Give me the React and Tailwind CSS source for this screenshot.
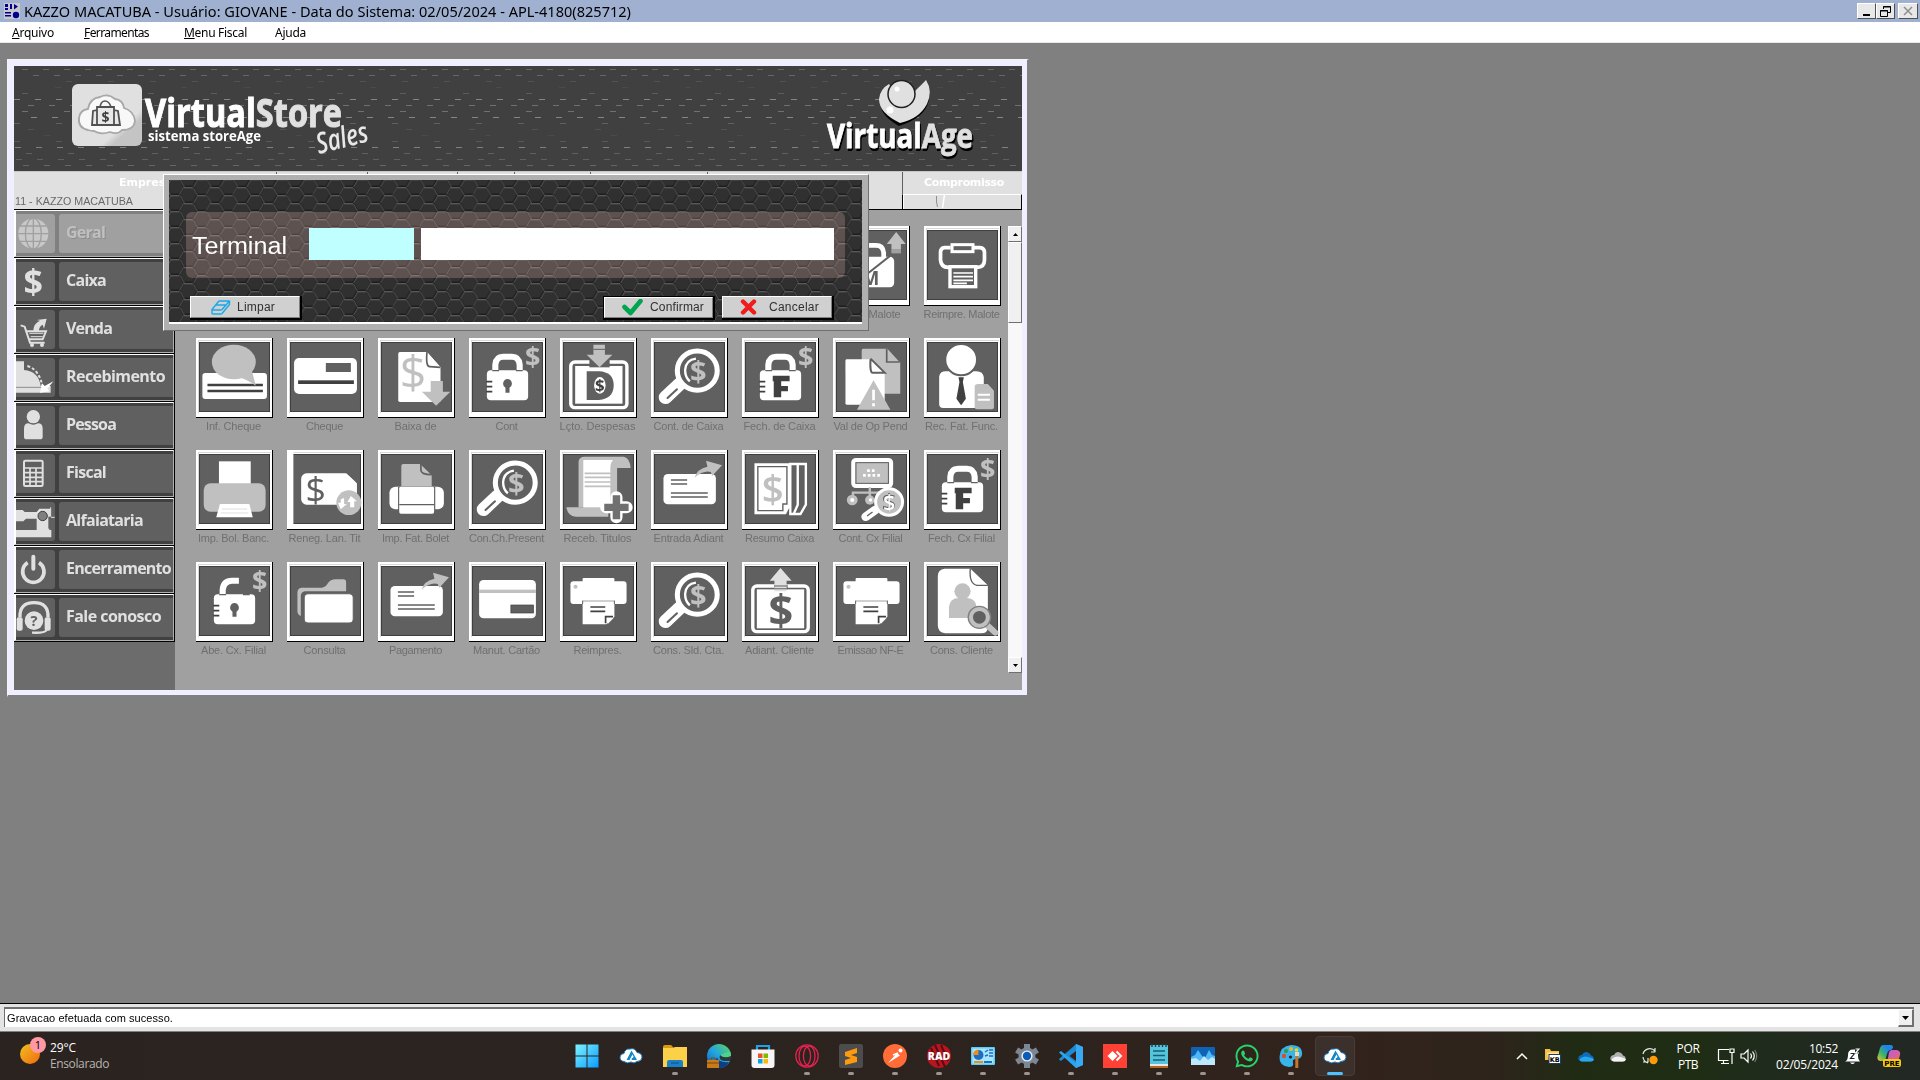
import React, { useLayoutEffect, useRef } from "react";
import { FaWhatsapp } from "react-icons/fa";

/* Text run set to a given width, by letter spacing or by horizontal scale */
function Fit({ w, scale, className = "", children }) {
  const ref = useRef(null);
  useLayoutEffect(() => {
    const el = ref.current;
    el.style.letterSpacing = "0px";
    el.style.transform = "none";
    const nat = el.getBoundingClientRect().width;
    if (scale) el.style.transform = `scaleX(${w / nat})`;
    else el.style.letterSpacing = `${(w - nat) / el.textContent.length}px`;
  }, [w, scale]);
  return (
    <span ref={ref} className={"inline-block origin-left whitespace-pre " + className}>
      {children}
    </span>
  );
}

const W = "#ffffff";
const G = "#c0c0c0";
const D = "#606060";
const K = "#404040";

const Dollar = ({ x, y, s = 60, fill = G, weight = 700 }) => (
  <text x={x} y={y + s * 0.36} fontSize={s} fill={fill} fontWeight={weight} textAnchor="middle" fontFamily="Open Sans, sans-serif">$</text>
);

const Lock = ({ mark, open }) => (
  <>
    {open ? (
      <path d="M70 88V72Q72 44 98 44h20" fill="none" stroke={W} strokeWidth="18" />
    ) : (
      <path d="M69 86V68Q71 44 92 44h26Q139 44 141 68V86" fill="none" stroke={W} strokeWidth="18" />
    )}
    <rect x="44" y="85" width="122" height="90" rx="12" fill={W} />
    <path d="M60 86h20M130 86h20" stroke={D} strokeWidth="4" />
    <path d="M42 119h18M42 134h18M42 149h18" stroke={K} strokeWidth="5" />
    {mark ? (
      <path d="M82 101h50v17h-25v14h20v16h-20v18H85V118h-3z" fill={K} />
    ) : (
      <path d="M105 111a14 14 0 0 1 6 26v15h-12v-15a14 14 0 0 1 6-26z" fill={D} />
    )}
    <Dollar x={180} y={43} s={80} />
  </>
);

const Magnifier = () => (
  <>
    <path d="M34 166L76 126" stroke={W} strokeWidth="40" strokeLinecap="round" />
    <path d="M40 168L68 142" stroke={D} strokeWidth="6" strokeLinecap="round" />
    <circle cx="128" cy="86" r="59" fill={D} stroke={W} strokeWidth="15" />
    <path d="M124 50Q94 54 92 84Q92 106 106 118" fill="none" stroke={W} strokeWidth="7" />
    <Dollar x={131} y={90} s={86} />
  </>
);

const SendCard = () => (
  <>
    <rect x="28" y="60" width="155" height="91" rx="13" fill={W} />
    <path d="M50 78h48M50 90h48M50 117h109M50 129h109" stroke={D} strokeWidth="4.5" />
    <path d="M120 71Q128 44 158 38L154 20L201 34L172 66L168 54Q146 48 120 71z" fill={G} />
  </>
);

const Printer = () => (
  <>
    <rect x="58" y="36" width="94" height="14" rx="3" fill={W} />
    <rect x="22" y="46" width="166" height="68" rx="9" fill={W} />
    <circle cx="37" cy="62" r="6" fill={G} />
    <path d="M58 106h94v46l-24 23h-70z" fill={W} />
    <path d="M57 105h96" stroke={G} strokeWidth="4" />
    <path d="M58 114v-10M152 114v-10" stroke={D} strokeWidth="3" />
    <path d="M81 123h44M81 136h44" stroke={K} strokeWidth="5" />
    <path d="M126 172v-20h22" fill="none" stroke={K} strokeWidth="5" />
    <path d="M132 172l16-16z" stroke={W} strokeWidth="3" />
  </>
);

const TILE_ART = {
  maloteUp: (
    <>
      <path d="M69 85V68Q71 46 92 46h26Q139 46 141 68V86" fill="none" stroke={W} strokeWidth="14" />
      <rect x="30" y="80" width="142" height="92" rx="13" fill={W} />
      <path d="M92 132L172 68" stroke={D} strokeWidth="6" />
      <text x="102" y="165" fontSize="56" fontWeight="700" fill={D} textAnchor="middle" fontFamily="Open Sans, sans-serif">M</text>
      <path d="M178 6l28 36h-14v28h-28V42h-14z" fill={G} />
      <path d="M164 60h28M164 66h28" stroke={D} strokeWidth="2" />
    </>
  ),
  reprint: (
    <>
      <path d="M70 53H52Q40 54 40 68V90Q42 112 62 112H148Q170 112 170 90V68Q170 54 156 53H138" fill="none" stroke={W} strokeWidth="11" />
      <rect x="74" y="44" width="62" height="21" fill={D} stroke={W} strokeWidth="9" />
      <rect x="68" y="110" width="76" height="60" fill={D} stroke={W} strokeWidth="10" />
      <path d="M78 129h58M78 140h58M78 151h58M78 160h40" stroke={W} strokeWidth="5" />
    </>
  ),
  infCheque: (
    <>
      <rect x="10" y="93" width="191" height="78" rx="9" fill={W} />
      <path d="M25 129h164M25 147h164" stroke={K} strokeWidth="8" />
      <ellipse cx="103" cy="60" rx="65" ry="52" fill={G} />
      <path d="M118 106Q140 112 168 131L156 84z" fill={G} />
    </>
  ),
  cheque: (
    <>
      <rect x="12" y="48" width="186" height="108" rx="15" fill={W} />
      <rect x="106" y="63" width="74" height="27" fill={D} />
      <rect x="24" y="115" width="165" height="11" fill={K} />
    </>
  ),
  baixa: (
    <>
      <path d="M56 30h80l40 46v100q0 4-4 4H56q-5 0-5-5V36q0-6 5-6z" fill={W} />
      <path d="M136 30q-4 44 8 44l32 2" fill={W} stroke={D} strokeWidth="5" />
      <Dollar x={95} y={90} s={138} weight={400} />
      <path d="M147 117h36v32h22l-42 42-42-42h26z" fill={G} />
    </>
  ),
  lock: <Lock />,
  lockF: <Lock mark />,
  lockOpen: <Lock open />,
  despesas: (
    <>
      <rect x="23" y="60" width="166" height="137" rx="12" fill={D} stroke={W} strokeWidth="10" />
      <rect x="36" y="72" width="140" height="113" fill={W} />
      <path d="M70 88h36q44 2 44 42t-44 44H70z" fill={D} />
      <ellipse cx="109" cy="130" rx="17" ry="25" fill={W} />
      <Dollar x={109} y={130} s={50} fill={K} />
      <path d="M78 44h60v32H78z" fill={D} />
      <path d="M90 8h34v30h22l-38 38-38-38h20z" fill={G} />
      <path d="M90 22h34" stroke={D} strokeWidth="3" />
    </>
  ),
  magnifier: <Magnifier />,
  pending: (
    <>
      <path d="M80 20h72l38 42v93H80q-4 0-4-4V26q0-6 4-6z" fill={G} />
      <path d="M150 20v40h38" fill="none" stroke={D} strokeWidth="5" />
      <path d="M32 52h70l42 42v90q0 4-4 4H32q-4 0-4-4V56q0-4 4-4z" fill={W} />
      <path d="M102 52v0l42 42v-42z" fill={G} />
      <path d="M102 52q-2 40 6 40h36l-42-42" fill={W} stroke={D} strokeWidth="6" />
      <path d="M111 115l50 88H62z" fill={G} />
      <path d="M111 143v32M111 184v9" stroke={W} strokeWidth="8" />
    </>
  ),
  funcionario: (
    <>
      <path d="M36 104q2-16 20-16h90q20 0 22 18v80q0 12-12 12H48q-12 0-12-12z" fill={W} />
      <circle cx="101" cy="53" r="47" fill={W} stroke={D} strokeWidth="6" />
      <path d="M93 106h16l-3 14 9 50-14 20-14-20 9-50z" fill={K} />
      <path d="M152 126h28l18 20v50q0 6-6 6h-44q-7 0-7-6v-62q0-8 11-8z" fill={G} />
      <path d="M150 158h36M150 173h36" stroke={W} strokeWidth="6" />
    </>
  ),
  boleto: (
    <>
      <rect x="59" y="22" width="94" height="70" fill={W} />
      <rect x="14" y="88" width="183" height="85" rx="20" fill={G} />
      <path d="M62 150h87l10 40H51z" fill={W} />
      <path d="M68 165h74M64 177h82" stroke="#e0e0e0" strokeWidth="3" />
    </>
  ),
  reneg: (
    <>
      <path d="M-4 -6h14v222h-14z" fill={W} />
      <rect x="33" y="58" width="165" height="94" rx="16" fill={W} />
      <path d="M164 56h40v38z" fill={D} />
      <path d="M166 58v28h30z" fill={W} />
      <Dollar x={76} y={106} s={106} fill={D} weight={400} />
      <circle cx="174" cy="146" r="37" fill={G} />
      <path d="M160 132v18h8l-18 16-8-20h8v-10zM190 160v-18h8l-18-16-10 18h8v16z" fill={W} />
    </>
  ),
  fatura: (
    <>
      <path d="M66 30h50l34 34v32H60V36q0-6 6-6z" fill={G} />
      <path d="M118 30v18q0 14 32 14" fill="none" stroke={D} strokeWidth="5" />
      <rect x="25" y="98" width="161" height="68" rx="18" fill={W} />
      <path d="M53 98v80M158 98v80" stroke={D} strokeWidth="5" />
      <rect x="54" y="98" width="103" height="81" rx="5" fill={W} />
      <path d="M54 152h103" stroke={D} strokeWidth="4" />
    </>
  ),
  titulos: (
    <>
      <path d="M46 24Q46 10 62 8h118q18 4 20 34h-40v118H46z" fill={G} />
      <path d="M60 18h88q-8 8-8 24v122H60z" fill={W} />
      <path d="M10 160h124v28H38Q14 186 10 160z" fill={G} />
      <path d="M64 58h78M64 70h78M64 84h78M64 97h78" stroke={G} strokeWidth="5" />
      <path d="M158 130v60M128 160h60" stroke={W} strokeWidth="36" strokeLinecap="round" />
      <path d="M158 124v72M122 160h72" stroke="#707070" strokeWidth="22" />
    </>
  ),
  sendCard: <SendCard />,
  resumo: (
    <>
      <path d="M134 30h46v122l-16 28h-30z" fill="none" stroke={W} strokeWidth="7" />
      <path d="M156 30v122l-12 28" fill="none" stroke={W} strokeWidth="7" />
      <path d="M28 28h107v125l-14 28H28z" fill={W} />
      <path d="M38 38h86v112h-12v20H38z" fill="none" stroke={D} strokeWidth="4" />
      <Dollar x={82} y={105} s={114} weight={600} />
    </>
  ),
  filial: (
    <>
      <rect x="51" y="18" width="112" height="78" rx="8" fill={G} stroke={W} strokeWidth="12" />
      <rect x="59" y="26" width="96" height="62" fill={G} stroke={D} strokeWidth="3" />
      <path d="M92 50h26M80 64h52" stroke={W} strokeWidth="8" strokeDasharray="8 6" />
      <path d="M100 100v30M50 130v-14h106v14" fill="none" stroke={G} strokeWidth="7" />
      <circle cx="48" cy="138" r="16" fill={G} />
      <circle cx="100" cy="138" r="14" fill={G} />
      <circle cx="48" cy="138" r="6" fill={W} />
      <circle cx="102" cy="138" r="5" fill={W} />
      <path d="M88 188L116 168" stroke={W} strokeWidth="26" strokeLinecap="round" />
      <path d="M92 186L108 174" stroke={D} strokeWidth="4" />
      <circle cx="157" cy="144" r="40" fill={G} stroke={W} strokeWidth="9" />
      <Dollar x={157} y={144} s={72} fill={D} weight={700} />
      <Dollar x={157} y={144} s={64} fill={W} weight={600} />
    </>
  ),
  folder: (
    <>
      <path d="M32 150q-10-4-10-14V80q0-14 12-15h60q10 0 18-13t26-12h20q8 0 8 10v26H44q-10 2-12 12z" fill={G} />
      <rect x="42" y="83" width="145" height="88" rx="12" fill={W} stroke={D} strokeWidth="3" />
    </>
  ),
  card: (
    <>
      <rect x="21" y="42" width="168" height="115" rx="13" fill={W} />
      <rect x="21" y="71" width="168" height="10" fill={G} />
      <rect x="115" y="117" width="67" height="24" fill={D} stroke={K} strokeWidth="2" />
    </>
  ),
  printer: <Printer />,
  adiant: (
    <>
      <rect x="23" y="60" width="164" height="137" rx="12" fill={D} stroke={W} strokeWidth="10" />
      <rect x="35" y="70" width="140" height="117" fill={W} />
      <Dollar x={106} y={134} s={128} fill={D} />
      <path d="M86 56h40v14H86z" fill={D} />
      <path d="M105 6l33 38h-15v32H87V44H73z" fill="#e0e0e0" />
      <path d="M87 60h36M87 68h36" stroke={D} strokeWidth="3" />
    </>
  ),
  cliente: (
    <>
      <path d="M52 8h76l52 52v122q0 20-20 20H54q-22-2-22-24V30Q32 10 52 8z" fill={W} />
      <path d="M128 8q-4 46 20 50h32" fill={W} stroke={D} strokeWidth="4" />
      <circle cx="105" cy="76" r="24" fill={G} />
      <path d="M65 156V124q2-28 30-28h24q26 2 28 28v32z" fill={G} />
      <path d="M174 174l28 26" stroke={G} strokeWidth="18" strokeLinecap="round" />
      <circle cx="155" cy="154" r="25" fill={D} stroke="#808080" strokeWidth="20" />
      <circle cx="155" cy="154" r="25" fill={D} stroke={G} strokeWidth="12" />
    </>
  ),
};

const ROWS = [
  [
    ["maloteUp", "Malote", 32],
    ["reprint", "Reimpre. Malote", 76],
  ],
  [
    ["infCheque", "Inf. Cheque", 55],
    ["cheque", "Cheque", 37],
    ["baixa", "Baixa de", 42],
    ["lock", "Cont", 22],
    ["despesas", "Lçto. Despesas", 76],
    ["magnifier", "Cont. de Caixa", 70],
    ["lockF", "Fech. de Caixa", 72],
    ["pending", "Val de Op Pend", 74],
    ["funcionario", "Rec. Fat. Func.", 73],
  ],
  [
    ["boleto", "Imp. Bol. Banc.", 71],
    ["reneg", "Reneg. Lan. Tit", 72],
    ["fatura", "Imp. Fat. Bolet", 67],
    ["magnifier", "Con.Ch.Present", 75],
    ["titulos", "Receb. Titulos", 68],
    ["sendCard", "Entrada Adiant", 70],
    ["resumo", "Resumo Caixa", 69],
    ["filial", "Cont. Cx Filial", 64],
    ["lockF", "Fech. Cx Filial", 67],
  ],
  [
    ["lockOpen", "Abe. Cx. Filial", 65],
    ["folder", "Consulta", 42],
    ["sendCard", "Pagamento", 53],
    ["card", "Manut. Cartão", 67],
    ["printer", "Reimpres.", 48],
    ["magnifier", "Cons. Sld. Cta.", 71],
    ["adiant", "Adiant. Cliente", 69],
    ["printer", "Emissao NF-E", 66],
    ["cliente", "Cons. Cliente", 63],
  ],
];

function Tile({ art, label, w, align = "pr-[2px]" }) {
  return (
    <div className="flex h-28 w-[91px] shrink-0 flex-col">
      <div className="flex h-20 w-[77px] border-b border-r border-black bg-white pl-[2px] pt-[2px]">
        <div className="h-[73px] w-[73px] border-l border-t border-[#d8d8d8] pt-px">
          <svg viewBox="0 0 210 210" className="h-[70px] w-[71px] overflow-visible" preserveAspectRatio="none">
            <rect width="210" height="210" fill={K} />
            <rect x="3" y="3" width="204" height="204" fill={D} />
            {TILE_ART[art]}
          </svg>
        </div>
      </div>
      <div className={"-mt-px flex h-[18px] w-[77px] items-center justify-center " + align}>
        <Fit w={w} className="text-[11px] leading-[18px] text-[#707070]">{label}</Fit>
      </div>
    </div>
  );
}

const L = "#e0e0e0";
const SIDE_ART = {
  globe: (
    <>
      <circle cx="52" cy="59" r="45" fill="#c8c8c8" />
      <g fill="none" stroke="#a0a0a0" strokeWidth="4">
        <path d="M52 12v94M4 59h96M12 36h80M12 82h80" />
        <ellipse cx="52" cy="59" rx="24" ry="46" />
      </g>
    </>
  ),
  dollar: <Dollar x={52} y={60} s={102} fill={L} />,
  cart: (
    <>
      <path d="M14 46l12 4 16 48h44M30 64h60L80 88H40" fill="none" stroke={L} strokeWidth="6" />
      <path d="M40 70h42M44 80h36" stroke={L} strokeWidth="3" />
      <circle cx="48" cy="105" r="6" fill={L} />
      <circle cx="78" cy="105" r="6" fill={L} />
      <path d="M52 64q0-24 20-32l-10-2 30-4-8 30-4-12q-10 4-12 20z" fill={L} />
    </>
  ),
  receb: (
    <>
      <path d="M0 10h24v26q44 4 50 48h30v20H0z" fill={L} />
      <path d="M34 24q36 10 46 64" fill="none" stroke={L} strokeWidth="6" strokeDasharray="9 6" />
      <path d="M0 88h86" stroke={D} strokeWidth="2" />
      <path d="M72 104l6-28 8 8 26-14-18 22 6 8z" fill={W} />
    </>
  ),
  person: (
    <>
      <circle cx="52" cy="32" r="20" fill={L} />
      <path d="M38 52q14 8 28 0 14 0 14 16v24q0 8-8 8H32q-8 0-8-8V68q0-16 14-16z" fill={L} />
    </>
  ),
  calc: (
    <>
      <rect x="24" y="20" width="56" height="76" rx="4" fill={D} stroke={L} strokeWidth="6" />
      <path d="M26 42h52M26 56h52M26 70h52M26 83h52M42 42v52M60 42v52" stroke={L} strokeWidth="5" />
    </>
  ),
  sewing: (
    <>
      <path d="M0 24h20l6 6h36l8-10h34v52h-4v16H62V50H30l-8 8H0z" fill={L} />
      <path d="M0 84h106v22H0z" fill={L} />
      <circle cx="80" cy="42" r="14" fill="#808080" stroke={K} strokeWidth="3" />
      <path d="M104 16v30h12" stroke={L} strokeWidth="3" fill="none" />
      <path d="M97 44h8v36h-8z" fill={D} />
    </>
  ),
  power: (
    <>
      <path d="M35 38a32 32 0 1 0 34 0" fill="none" stroke={L} strokeWidth="11" />
      <path d="M52 20v36" stroke={L} strokeWidth="12" strokeLinecap="round" />
    </>
  ),
  headset: (
    <>
      <path d="M12 58Q10 14 54 14T96 58" fill="none" stroke={L} strokeWidth="10" />
      <rect x="2" y="58" width="18" height="40" rx="6" fill={L} />
      <rect x="86" y="58" width="18" height="40" rx="6" fill={L} />
      <circle cx="54" cy="68" r="28" fill={L} />
      <text x="54" y="84" fontSize="44" fontWeight="700" fill={D} textAnchor="middle" fontFamily="Open Sans, sans-serif">?</text>
      <path d="M92 96q-6 10-44 8" fill="none" stroke={L} strokeWidth="7" />
    </>
  ),
};

const SIDE = [
  ["globe", "Geral", 39],
  ["dollar", "Caixa", 40],
  ["cart", "Venda", 46],
  ["receb", "Recebimento", 99],
  ["person", "Pessoa", 50],
  ["calc", "Fiscal", 40],
  ["sewing", "Alfaiataria", 77],
  ["power", "Encerramento", 105],
  ["headset", "Fale conosco", 95],
];

function SideItem({ art, label, w, off }) {
  return (
    <div className="h-12 border-b border-r border-black">
      <div className="h-[47px] border-b border-l-2 border-r border-t border-white border-b-[#b0b0b0] border-r-[#b0b0b0]">
        <div className={"flex h-[45px] items-center gap-1 pb-px " + (off ? "bg-[#808080]" : "bg-[#404040]")}>
          <div className={"h-[39px] w-[39px] rounded-r-[3px] " + (off ? "bg-[#a0a0a0]" : "bg-[#606060]")}>
            <svg viewBox="0 0 117 117" className="h-[39px] w-[39px] overflow-visible">{SIDE_ART[art]}</svg>
          </div>
          <div className={"flex h-[39px] min-w-0 flex-1 items-center rounded-l-[3px] pb-[3px] pl-[7px] " + (off ? "bg-[#a0a0a0]" : "bg-[#606060]")}>
            <Fit w={w} className={"font-['Open_Sans',sans-serif] text-[16px] font-bold leading-5 " + (off ? "text-[#c0c0c0] [text-shadow:1px_1px_0_#8c8c8c]" : "text-[#e0e0e0]")}>{label}</Fit>
          </div>
        </div>
      </div>
    </div>
  );
}

/* [y, x offset, colour, pitch] of every row of dashes in the banner */
const DASHES = [
  [3, 8, "#666666", 21], [9, 19, "#666666", 21], [15, 52, "#525252", 42], [21, 41, "#4a4a4a", 63],
  [27, 8, "#5c5c5c", 63], [33, 0, "#858585", 21], [39, 14, "#707070", 21], [45, 8, "#707070", 42],
  [51, 17, "#858585", 21], [57, 0, "#606060", 42], [63, 14, "#525252", 63], [69, 30, "#4a4a4a", 63],
  [75, 0, "#585858", 42], [81, 1, "#808080", 21], [87, 12, "#606060", 42], [93, 2, "#606060", 21], [99, 9, "#666666", 21],
];

function DashTexture() {
  return (
    <svg className="absolute inset-0 h-[105px] w-[1008px]">
      {DASHES.map(([y, x, c, p]) => (
        <path key={y} d={`M${x} ${y + 0.5}H1008`} stroke={c} strokeWidth="1" strokeDasharray={`6 ${p - 6}`} />
      ))}
    </svg>
  );
}

function Banner() {
  return (
    <div className="relative flex h-[105px] justify-between bg-[#404040]">
      <DashTexture />
      <div className="relative flex pl-[58px] pt-[18px]">
        <svg className="h-[62px] w-[70px]" viewBox="0 0 70 62">
          <defs>
            <linearGradient id="badge" x1="0" y1="0" x2="1" y2="1">
              <stop offset="0.7" stopColor="#e0e0e0" />
              <stop offset="0.78" stopColor="#c4c4c4" />
            </linearGradient>
          </defs>
          <rect width="70" height="62" rx="6" fill="url(#badge)" />
          <path d="M16 46Q6 44 7 34Q8 26 16 25Q18 14 28 13Q36 9 43 15Q51 16 52 24Q62 27 63 37Q62 46 50 46Q46 51 38 48Q28 51 22 47Q19 47 16 46z" fill="#f8f8f8" stroke="#a8a8a8" strokeWidth="1.8" />
          <path d="M28 23q1-6 5-6t6 6" fill="none" stroke="#555" strokeWidth="1.6" />
          <path d="M25 23h17v18H25zM25 26l-4 1-1 14h5M42 26l4 1 2 14h-6" fill="#e8e8e8" stroke="#505050" strokeWidth="1.8" />
          <text x="33.500" y="38" fontSize="14" fontWeight="700" fill="#404040" textAnchor="middle" fontFamily="Open Sans, sans-serif">$</text>
        </svg>
        <div className="relative ml-[3px] w-[240px] font-['Open_Sans',sans-serif] font-bold">
          <div className="h-[42px] text-[40px] leading-[56px] text-white">
            <Fit w={197} scale className="[-webkit-text-stroke:1px]">Virtual<span className="text-[#e0e0e0]">Store</span></Fit>
          </div>
          <div className="pl-[3px] text-[14px] leading-[20px] text-white">
            <Fit w={113} scale>sistema storeAge</Fit>
          </div>
          <div className="absolute left-[170px] top-[33px] -rotate-[14deg] text-[29px] font-semibold italic leading-[36px] text-[#e8e8e8]">
            <Fit w={58} scale>Sales</Fit>
          </div>
        </div>
      </div>
      <div className="relative flex w-[195px] flex-col pt-[13px]">
        <svg className="ml-[50px] h-[48px] w-[56px]" viewBox="0 0 56 48">
          <path d="M22 47Q2 36 3 21Q3 11 11 6Q8 28 28 30Q40 30 42 8L48 2Q56 14 50 27Q44 40 22 47z" fill="#000" />
          <path d="M23 44Q2 34 2 20Q3 10 12 5L26 28Q38 26 38 12L49 1Q56 12 50 25Q42 40 23 44z" fill="#e0e0e0" />
          <circle cx="24.500" cy="15" r="13.500" fill="#e0e0e0" stroke="#202020" strokeWidth="1.5" />
          <circle cx="20" cy="10" r="2.500" fill="#fff" />
          <circle cx="13" cy="31" r="3.500" fill="#fff" />
        </svg>
        <div className="-mt-[16px] font-['Open_Sans',sans-serif] text-[34px] font-bold leading-[48px] text-white [text-shadow:1px_3px_0_#000,2px_2px_0_#000]">
          <Fit w={146} scale className="[-webkit-text-stroke:0.8px]">Virtual<span className="text-[#e0e0e0]">Age</span></Fit>
        </div>
      </div>
    </div>
  );
}

const HEADS = [263, 91, 90, 57, 76, 117, 195];

function HeaderBand() {
  return (
    <div className="flex h-[39px] flex-col border-b border-black bg-[#e0e0e0]">
      <div className="flex h-[23px] border-t border-[#c8c8c8]">
        {HEADS.map((w, i) => (
          <div key={i} className="h-full shrink-0 border-r border-[#606060]" style={{ width: w }}>
            {i === 0 && (
              <div className="pl-[105px] pt-[2px] font-['DejaVu_Sans',sans-serif] text-[11px] font-bold leading-[18px] text-white">Empresa</div>
            )}
          </div>
        ))}
        <div className="flex-1 pl-[21px] pt-[2px] font-['DejaVu_Sans',sans-serif] text-[11px] font-bold leading-[18px] text-white">
          <Fit w={80}>Compromisso</Fit>
        </div>
      </div>
      <div className="flex flex-1">
        <div className="w-[889px] border-r border-t border-r-black border-t-[#e0e0e0] pl-px leading-[10px]">
          <Fit w={118} scale className="text-[11px] leading-[10px] text-[#686868]">11 - KAZZO MACATUBA</Fit>
        </div>
        <div className="flex flex-1 border-l border-r border-t border-white border-r-black pl-[31px]">
          <svg viewBox="0 0 14 14" className="h-[14px] w-[14px]">
            <path d="M1.500 1v6l1 5" fill="none" stroke="#909090" />
            <path d="M9.500 0l-2 13" fill="none" stroke="#fff" strokeWidth="1.500" />
          </svg>
        </div>
      </div>
    </div>
  );
}

const RAISED = "border border-b-[#707070] border-l-white border-r-[#707070] border-t-white bg-[#f0f0f0]";

function Arrow({ up, big }) {
  return (
    <svg viewBox="0 0 7 4" className={big ? "h-1 w-[7px]" : "h-[3px] w-[5px]"} preserveAspectRatio="none">
      <path d={up ? "M3.500 0L7 4H0z" : "M0 0h7L3.500 4z"} fill="#000" />
    </svg>
  );
}

function Scrollbar() {
  return (
    <div className="mt-[16px] flex h-[447px] w-[14px] shrink-0 flex-col bg-[#f8f8f8]">
      <div className={"flex h-4 items-center justify-center " + RAISED}><Arrow up /></div>
      <div className={"h-[81px] " + RAISED} />
      <div className="flex-1" />
      <div className={"flex h-4 items-center justify-center " + RAISED}><Arrow /></div>
    </div>
  );
}

function HexTexture() {
  return (
    <svg className="absolute inset-0 h-full w-full">
      <defs>
        <pattern id="hex" width="26.7" height="16" patternUnits="userSpaceOnUse" x="6" y="7">
          <rect width="26.700" height="16" fill="#303030" />
          <g fill="none" stroke="#1e1e1e" strokeWidth="1.800">
            <path d="M0 7.500H4.450L8.900 -0.500H17.800L22.250 7.500H26.700M4.450 7.500L8.900 15.500H17.800L22.250 7.500" />
          </g>
          <path d="M0 8.700H4.450M8.900 0.700H17.800M22.250 8.700H26.700" fill="none" stroke="#686868" strokeWidth="1" />
          <path d="M5.200 8.800L9.400 16M4.450 7.500L8.900 -0.300M18.200 1L22.400 8.200M22.600 8.800L18.400 16" fill="none" stroke="#505050" strokeWidth="1" />
        </pattern>
      </defs>
      <rect width="100%" height="100%" fill="url(#hex)" />
    </svg>
  );
}

function DialogButton({ icon, label, w, iconClass, main }) {
  return (
    <div className={"flex h-6 w-[112px] items-center border-b-2 border-r-2 border-black " + (main ? "border-l border-t" : "")}>
      <div className="flex h-full w-full items-center border border-b-[#808080] border-r-[#808080] border-l-white border-t-white bg-[#d0d0d0]">
        <div className={iconClass}>{icon}</div>
        <Fit w={w} className="pb-px text-[12px] leading-[18px] text-[#303030]">{label}</Fit>
      </div>
    </div>
  );
}

function Dialog() {
  return (
    <div className="absolute left-[163px] top-[131px] h-[157px] w-[706px] border border-b-[#707070] border-l-white border-r-[#707070] border-t-white bg-[#b0b0b0] p-[5px]">
      <div className="relative flex h-[144px] w-[693px] flex-col border-b-2 border-white bg-[#2f2f2f]">
        <HexTexture />
        <div className="relative ml-[17px] mt-8 h-[66px] w-[659px] rounded-[6px] bg-[#382a27] mix-blend-screen" />
        <div className="relative -mt-[66px] ml-[17px] flex h-[66px] w-[659px] items-center pb-[2px]">
          <div className="w-[123px] pl-[6px] pt-1">
            <Fit w={95} scale className="text-[23px] leading-[32px] text-white">Terminal</Fit>
          </div>
          <div className="h-8 w-[105px] bg-[#c0ffff]" />
          <div className="ml-[7px] h-8 w-[413px] bg-white" />
        </div>
        <div className="relative mt-[18px] flex pl-[21px]">
          <DialogButton
            label="Limpar"
            w={38}
            iconClass="ml-5 mr-[6px]"
            icon={
              <svg viewBox="0 0 20 15" className="h-[15px] w-5">
                <path d="M1 9.500L7.500 1.500Q8 1 9 1h9q1 0 .5 1v2.500L11.500 13Q11 14 10 14H2Q1 14 1 13zM1 10h9q1 0 1.500-1l7-8M5 5h9.500" fill="none" stroke="#18a8e8" strokeWidth="1.400" />
              </svg>
            }
          />
          <div className="w-[301px]" />
          <DialogButton
            main
            label="Confirmar"
            w={54}
            iconClass="ml-[17px] mr-[7px]"
            icon={
              <svg viewBox="0 0 21 17" className="h-[17px] w-[21px]">
                <path d="M2.500 8l6 6L18.500 2" fill="none" stroke="#00a550" strokeWidth="4.600" strokeLinecap="round" strokeLinejoin="round" />
              </svg>
            }
          />
          <div className="w-[7px]" />
          <DialogButton
            label="Cancelar"
            w={50}
            iconClass="ml-[17px] mr-3"
            icon={
              <svg viewBox="0 0 17 16" className="h-4 w-[17px]">
                <path d="M3 2.500l11 11M14 2.500l-11 11" stroke="#f01c1c" strokeWidth="4.400" strokeLinecap="round" />
              </svg>
            }
          />
        </div>
      </div>
    </div>
  );
}

function AppWindow() {
  return (
    <div className="ml-[7px] mt-4 flex h-[638px] w-[1022px] flex-col border border-b-2 border-r-2 border-b-[#808080] border-l-[#f4f4f4] border-r-[#808080] border-t-[#f4f4f4] bg-[#f0efff] pb-[5px] pl-[6px] pr-[5px] pt-[6px]">
      <Banner />
      <HeaderBand />
      <div className="flex min-h-0 flex-1 bg-[#a0a0a0]">
        <div className="w-[161px] shrink-0 bg-[#6c6c6c]">
          {SIDE.map(([art, label, w], i) => (
            <SideItem key={label} art={art} label={label} w={w} off={i === 0} />
          ))}
        </div>
        <div className="flex min-w-0 flex-1 flex-col overflow-hidden pl-[21px] pt-4">
          {ROWS.map((row, i) => (
            <div key={i} className={"flex h-28 shrink-0 " + (i === 0 ? "pl-[637px]" : "")}>
              {row.map(([art, label, w], j) => (
                <Tile key={label} art={art} label={label} w={w} align={i === 0 && j === 0 ? "pl-[26px]" : undefined} />
              ))}
            </div>
          ))}
        </div>
        <Scrollbar />
      </div>
    </div>
  );
}

function TitleBar() {
  const btn = "flex h-4 items-center justify-center border border-b-[#505050] border-l-white border-r-[#505050] border-t-white bg-[#e8e8e8]";
  return (
    <div className="flex h-[22px] items-center bg-[#a0b0d0] pl-1 pr-[2px]">
      <svg viewBox="0 0 16 16" className="h-4 w-4">
        <rect width="16" height="16" fill="#c8c8cc" />
        <path d="M1 1h3v3H1zM6 1h2v5H6zM10 1l4 2.500-4 3zM1 5h3v2H1zM1 9h6v1.500H1zM1 12h6v1.500H1z" fill="#000090" />
        <circle cx="12" cy="12" r="3.200" fill="#000090" />
      </svg>
      <div className="flex-1 pl-1 font-['Noto_Sans',sans-serif] text-[15px] leading-[22px] text-black">
        <Fit w={607} scale>KAZZO MACATUBA - Usuário: GIOVANE - Data do Sistema: 02/05/2024 - APL-4180(825712)</Fit>
      </div>
      <div className={btn + " w-[19px]"}><div className="mt-[8px] h-[2px] w-[7px] bg-black" /></div>
      <div className={btn + " w-[19px]"}>
        <svg viewBox="0 0 11 11" className="h-[11px] w-[11px]" fill="none" stroke="#000">
          <path d="M3.500 3V.5h7v6H8M3 1h8M.5 4.500h7v6h-7zM0 5h8" />
        </svg>
      </div>
      <div className={btn + " ml-[3px] w-[20px]"}>
        <svg viewBox="0 0 10 10" className="h-[10px] w-[10px]" fill="none" stroke="#909090" strokeWidth="1.600">
          <path d="M1 1l8 8M9 1L1 9" />
        </svg>
      </div>
    </div>
  );
}

function MenuBar() {
  return (
    <div className="flex h-[21px] items-center border-b border-[#e8e8e8] bg-white pl-3 pt-[2px] font-['Noto_Sans',sans-serif] text-[12px] leading-[18px] text-black">
      <div className="w-[72px]"><Fit w={42}><u>A</u>rquivo</Fit></div>
      <div className="w-[100px]"><Fit w={65}><u>F</u>erramentas</Fit></div>
      <div className="w-[91px]"><Fit w={63}><u>M</u>enu Fiscal</Fit></div>
      <div><Fit w={31}>A<u>j</u>uda</Fit></div>
    </div>
  );
}

function StatusBar() {
  return (
    <div className="flex h-[29px] border-b border-t border-b-[#808080] border-t-black bg-[#e4e4e4] px-1 pb-1 pt-[3px]">
      <div className="mr-[2px] flex flex-1 items-center border-l border-t-2 border-[#707070] bg-white pl-[2px]">
        <Fit w={166} className="flex-none text-[11px] leading-[18px] text-black">Gravacao efetuada com sucesso.</Fit>
        <div className="ml-auto flex h-[18px] w-4 items-center justify-center border border-b-2 border-r-2 border-b-[#707070] border-l-white border-r-[#707070] border-t-white bg-[#f0f0f0]">
          <Arrow big />
        </div>
      </div>
    </div>
  );
}

const CloudA = () => (
  <g>
    <path d="M5 17.500Q0.800 17 1 13Q1.500 9.500 5 9.500Q6 4.500 11 5Q16 3.500 18 8.500Q23 9 23 13.500Q22.500 17.500 18 17.500Q15 20 12 18Q8 20 5 17.500z" fill="#fff" stroke="#1678b8" strokeWidth="1" />
    <path d="M12.500 6.500L7.500 16h3l3-5.500 1.200 2.500-2 1.500v1.500H18z" fill="#1487c9" />
  </g>
);

const TASKS = [
  <><defs><linearGradient id="win" x1="0" y1="0" x2="1" y2="1"><stop stopColor="#7df3ff" /><stop offset="1" stopColor="#0a9cff" /></linearGradient></defs><path d="M.5.5h11v11H.5zM12.500.5h11v11h-11zM.5 12.500h11v11H.5zM12.500 12.500h11v11h-11z" fill="url(#win)" /></>,
  <CloudA />,
  <><path d="M0 3q0-2 2-2h6l3 3H0z" fill="#d99a12" /><path d="M0 4h10l2-1h12v20H0z" fill="#fdd04a" /><path d="M4 23v-5q0-2 2-2h12q2 0 2 2v5z" fill="#1a80c8" /><path d="M8 19h8" stroke="#0b4f92" strokeWidth="1" /></>,
  <><defs><linearGradient id="edge" x1="0" y1="1" x2="1" y2="0"><stop stopColor="#0d5fb8" /><stop offset=".5" stopColor="#23a6e0" /><stop offset="1" stopColor="#62d84e" /></linearGradient></defs><circle cx="12" cy="12" r="12" fill="url(#edge)" /><path d="M10 13q1 6 12 5-3 6-10 6-6-2-2-11z" fill="#0a3f86" /><path d="M13 11q-2 5 4 6h7V12z" fill="#2b2420" opacity=".85" /><path d="M24 12q0-3-1-5l-10 4q4 4 11 1z" fill="#4fd38c" /><path d="M0 16h12v8H0z" fill="#c87a1a" /><path d="M4 16v-2h4v2M0 19h12" fill="none" stroke="#7a4408" /></>,
  <><path d="M6 6V2h12v4" fill="none" stroke="#1fa0e8" strokeWidth="2.200" /><path d="M.5 5.500h23V21q0 3-3 3h-17q-3 0-3-3z" fill="#f6f6f6" /><path d="M7 9.500h4.500V14H7z" fill="#f25022" /><path d="M12.500 9.500H17V14h-4.500z" fill="#7fba00" /><path d="M7 15h4.500v4.500H7z" fill="#00a4ef" /><path d="M12.500 15H17v4.500h-4.500z" fill="#ffb900" /></>,
  <g fill="none" stroke="#e0224e" strokeWidth="1.300"><circle cx="12" cy="12" r="11.200" /><ellipse cx="9.800" cy="12" rx="5.800" ry="10" /><ellipse cx="14.200" cy="12" rx="5.800" ry="10" /></g>,
  <><rect width="24" height="24" rx="2" fill="#4c4c4c" /><path d="M6 8l12-4v5l-6 2 6 2v5L6 21v-5l6-2-6-2z" fill="#ff9a0e" /></>,
  <><circle cx="12" cy="12" r="12" fill="#ff6c37" /><path d="M5 19l9-10 3 2.500z" fill="#fff" /><circle cx="17.500" cy="6.500" r="2" fill="#fff" /><path d="M10 11l5-2" stroke="#fff" strokeWidth="1.500" /></>,
  <><circle cx="12" cy="12" r="12" fill="#b5161f" /><path d="M4 4l8 18M8 1l10 22M14 1l7 16" stroke="#5a0a10" strokeWidth="2" /><text x="12" y="16" fontSize="10.500" fontWeight="800" fill="#fff" textAnchor="middle" fontFamily="Open Sans, sans-serif">RAD</text></>,
  <><rect x="0" y="3" width="24" height="18" rx="1" fill="#5ecbf5" /><rect x="1.500" y="4.500" width="21" height="15" fill="#a8e6ff" /><circle cx="7.500" cy="11" r="5" fill="#1b6fc0" /><path d="M7.500 11V5.500A5.500 5.500 0 0 0 2 11z" fill="#f28a1c" /><path d="M14 8l3-2M14 12l3-1M18 6h4M18 9h4M18 12h4" stroke="#1b6fc0" strokeWidth="1.500" /><path d="M3 18h9" stroke="#f28a1c" strokeWidth="2" /><path d="M13 18h8" stroke="#1b6fc0" strokeWidth="2" /></>,
  <><g stroke="#7c8794" strokeWidth="6"><path d="M12 0v24M1.600 6l20.800 12M22.400 6L1.600 18" /></g><circle cx="12" cy="12" r="8.500" fill="#7c8794" /><circle cx="12" cy="12" r="5.600" fill="#f0f0f0" /><circle cx="12" cy="12" r="4.200" fill="#0a5cb8" /></>,
  <><path d="M17 0l7 3v18l-7 3L6 13.500 2 17 0 15.500V15L15 2z" fill="#1f8ad6" /><path d="M0 8.500L2 7l15 12v5L6 14z" fill="#2ba4f0" /><path d="M17 7v10l-6.500-5z" fill="#30231d" /><path d="M17 0l7 3v18l-7 3z" fill="#3aa9f3" /></>,
  <><rect width="24" height="24" fill="#ff4136" /><path d="M4.500 12L9.500 7l5 5-5 5z" fill="#fff" /><path d="M13.500 7.500L18 12l-4.500 4.500" fill="none" stroke="#fff" strokeWidth="2" /></>,
  <><rect x="3" y="1" width="18" height="21" rx="1" fill="#55c4dc" /><path d="M3 20h18v2H3z" fill="#e8e8e8" /><path d="M3 22h18v2H3z" fill="#b5651d" /><path d="M6 7h12M6 11.500h12M6 16h12" stroke="#14607a" strokeWidth="1.600" /><path d="M5 0v3M8.500 0v3M12 0v3M15.500 0v3M19 0v3" stroke="#20404c" strokeWidth="1.400" /></>,
  <><rect y="3" width="24" height="18" rx="1" fill="#0e63b5" /><path d="M0 13l4-2 3-5 4 6 3 2 4-8 3 5 3 1v9H0z" fill="#4db8f5" /><path d="M0 15l5-1 4 3 4-5 4 4 4-3 3 2v6H0z" fill="#bfe8ff" /></>,
  null,
  <><path d="M12 1Q24 1 23 11q-1 4-6 4-4 0-3 4t-4 4Q0 22 .5 13 1 2 12 1z" fill="#37b4ec" /><circle cx="5" cy="12" r="2.200" fill="#e8482c" /><circle cx="7" cy="7" r="2" fill="#2c9c44" /><circle cx="12" cy="5" r="2" fill="#f6b91a" /><circle cx="17.500" cy="6" r="1.800" fill="#f6d61a" /><circle cx="11.500" cy="13" r="1.600" fill="#2b2420" /><path d="M17.800 8v16" stroke="#c07a2c" strokeWidth="3" /><path d="M16 8h4v4h-4z" fill="#e8d8b8" /></>,
  <CloudA />,
];

function Taskbar() {
  return (
    <div className="relative flex h-12 bg-[linear-gradient(90deg,#2a2320_0%,#2b2420_30%,#2d231e_55%,#32231c_70%,#2d241b_78%,#202b14_82%,#1f2d14_88%,#1f2b1c_92%,#222824_100%)] font-['Open_Sans',sans-serif] text-white">
      <div className="flex w-[567px] pl-5 pt-[5px]">
        <div className="relative h-8 w-7">
          <div className="mt-[7px] h-5 w-5 rounded-full bg-[linear-gradient(135deg,#f0c020,#f06a10)]" />
          <div className="absolute left-[10px] top-0 h-4 w-4 rounded-full bg-[#ff99a4] text-center text-[11px] leading-4 text-black">1</div>
        </div>
        <div className="pl-[2px] pt-[3px] text-[12px] leading-4">
          <div><Fit w={26}>29°C</Fit></div>
          <div className="text-[#b8b4b0]"><Fit w={59}>Ensolarado</Fit></div>
        </div>
      </div>
      {TASKS.map((art, i) => (
        <div key={i} className={"mr-1 mt-1 flex h-10 w-10 shrink-0 flex-col items-center rounded-[4px] pt-2 " + (i === 17 ? "border border-[#463c38] bg-[#3b302c]" : "")}>
          {art ? (
            <svg viewBox="0 0 24 24" className={"h-6 w-6 shrink-0 " + (i === 17 ? "-mt-px" : "")}>{art}</svg>
          ) : (
            <FaWhatsapp className="h-6 w-6 shrink-0 scale-110 text-[#25d366]" />
          )}
          {i === 17 ? (
            <div className="mt-[4px] h-[3px] w-4 rounded-full bg-[#4cc2ff]" />
          ) : (
            i !== 0 && i !== 1 && i !== 3 && i !== 4 && <div className="mt-[4px] h-[3px] w-[6px] rounded-full bg-[#9c9490]" />
          )}
        </div>
      ))}
      <div className="ml-auto flex items-center">
        <svg viewBox="0 0 12 8" className="mr-[17px] h-2 w-3"><path d="M1 7l5-5 5 5" fill="none" stroke="#fff" strokeWidth="1.500" /></svg>
        <svg viewBox="0 0 16 16" className="mr-[17px] h-4 w-4">
          <path d="M0 1h5l1 2h8v9H0z" fill="#f5c040" />
          <path d="M2 4.500h12v5H3z" fill="#fde49a" />
          <rect x="4" y="6.500" width="11.500" height="9" fill="#fff" stroke="#223a5a" />
          <text x="9.800" y="13.800" fontSize="6.500" fontWeight="800" fill="#000" textAnchor="middle" fontFamily="DejaVu Sans, sans-serif">KB</text>
        </svg>
        <svg viewBox="0 0 16 11" className="mr-[16px] h-[11px] w-4"><path d="M4 10.500Q0 10 .3 7 1 4 4 4q2-4 6-2.500 2.500 1 3 3 3 .5 2.500 3.500-.5 2.500-3 2.500z" fill="#0f6cbd" /><path d="M4 10.500Q1.500 10 2 8q4-5 14 0-.5 2.500-3 2.500z" fill="#28a8ea" /></svg>
        <svg viewBox="0 0 16 11" className="mr-[15px] h-[11px] w-4"><path d="M4 10.500Q0 10 .3 7 1 4 4 4q2-4 6-2.500 2.500 1 3 3 3 .5 2.500 3.500-.5 2.500-3 2.500z" fill="#b0b0b0" /><path d="M4 10.500Q1.500 10 2 8q4-5 14 0-.5 2.500-3 2.500z" fill="#f4f4f4" /></svg>
        <svg viewBox="0 0 18 18" className="mr-[17px] h-[18px] w-[18px]"><path d="M2 7a7 7 0 0 1 12-3V1M14 5h-4M2 10a7 7 0 0 0 5 6M2 15h5v-4" fill="none" stroke="#e8e8e8" strokeWidth="1.200" /><circle cx="12.500" cy="13" r="4.200" fill="#ff9a0a" /></svg>
        <div className="mr-[17px] w-[24px] pt-[2px] text-center text-[12px] leading-4"><Fit w={23}>POR</Fit><Fit w={20}>PTB</Fit></div>
        <svg viewBox="0 0 18 18" className="mr-[5px] h-[18px] w-[18px]" fill="none" stroke="#fff" strokeWidth="1.200"><path d="M12 2.500H1.500v11h10M4 16.500h8M6.500 13.500v3M13 2h4v3.500h-4zM15 5.500V17" /></svg>
        <svg viewBox="0 0 18 16" className="mr-[15px] h-4 w-[18px]" fill="none" stroke="#fff" strokeWidth="1.200"><path d="M1 6h3l4-4v12l-4-4H1zM10.500 5.500q2 2.500 0 5M12.500 3.500q3.500 4.500 0 9" /><path d="M14.700 2q4 6 0 12" stroke="#777" /></svg>
        <div className="mr-[7px] w-[65px] pt-px text-right text-[12px] leading-4"><Fit w={29}>10:52</Fit><Fit w={62}>02/05/2024</Fit></div>
        <svg viewBox="0 0 15 17" className="mr-[17px] h-[17px] w-[15px]">
          <path d="M0 13.500q3-1 3-6.500 0-5.500 5-5.500h2v4h3V8q0 4 2 5.500zM5 14.500h5q-2.500 3-5 0z" fill="#fff" />
          <path d="M5.500 5.500h4l-4 5h4" fill="none" stroke="#223" strokeWidth="1.200" />
          <path d="M10.500 1h3.500l-3.500 4h3.500" fill="none" stroke="#fff" strokeWidth="1.200" />
        </svg>
        <svg viewBox="0 0 24 24" className="mr-[19px] h-6 w-6">
          <defs><linearGradient id="cp" x1="0" y1="1" x2="1" y2="0"><stop stopColor="#f3c22b" /><stop offset=".4" stopColor="#36b36b" /><stop offset=".7" stopColor="#1f86e8" /></linearGradient><linearGradient id="cq" x1="0" y1="0" x2="1" y2="1"><stop stopColor="#b35cf0" /><stop offset="1" stopColor="#f0685a" /></linearGradient></defs>
          <path d="M6 1h8q2 0 2 3l-2 2q-3 0-4 4l-2 7H3q-4-1-2-6l2-7q1-3 3-3z" fill="url(#cp)" />
          <path d="M14 6h6q4 1 3 5l-2 7H9l2-4 1-6z" fill="url(#cq)" />
          <rect x="6" y="15" width="18" height="8" rx="2" fill="#f9c80e" />
          <text x="15" y="21.500" fontSize="7" fontWeight="800" fill="#000" textAnchor="middle" fontFamily="DejaVu Sans, sans-serif">PRE</text>
        </svg>
      </div>
    </div>
  );
}

export default function App() {
  return (
    <div className="flex h-[1080px] w-[1920px] flex-col overflow-hidden bg-[#808080] font-['Liberation_Sans',Arial,sans-serif]">
      <TitleBar />
      <MenuBar />
      <div className="relative min-h-0 flex-1">
        <div className="flex h-full flex-col">
          <AppWindow />
        </div>
        <Dialog />
      </div>
      <StatusBar />
      <Taskbar />
    </div>
  );
}
